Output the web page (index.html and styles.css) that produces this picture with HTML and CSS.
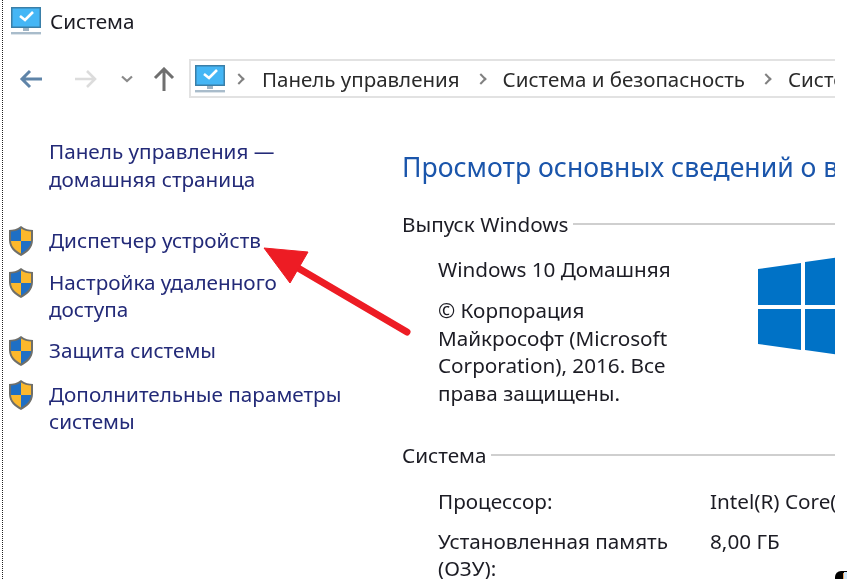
FILE: index.html
```html
<!DOCTYPE html>
<html lang="ru">
<head>
<meta charset="utf-8">
<title>Система</title>
<link rel="stylesheet" href="styles.css">
</head>
<body>
<svg width="0" height="0" class="defs">
  <defs>
    <g id="monitor">
      <rect x="0" y="0" width="30" height="21" fill="#3a7fa8"/>
      <rect x="1.5" y="1.5" width="27" height="18" fill="#45b6f5"/>
      <path d="M9 9l5 4 8-8" fill="none" stroke="#fff" stroke-width="2.6"/>
      <rect x="12" y="21" width="6" height="3" fill="#9fb4c4"/>
      <rect x="0" y="25" width="30" height="2.4" fill="#a9bccb"/>
    </g>
    <g id="shield">
      <path d="M13 0 C9 3 5 4 1 4 L1 14 C1 22 7 27 13 30 C19 27 25 22 25 14 L25 4 C21 4 17 3 13 0Z" fill="#6f6f6a"/>
      <path d="M13 2.5 V15 H3 V5.6 C6.5 5.5 10 4.5 13 2.5Z" fill="#1f6fc4"/>
      <path d="M13 2.5 V15 H23 V5.6 C19.5 5.5 16 4.5 13 2.5Z" fill="#fbb82c"/>
      <path d="M3 15 H13 V27.5 C8 25 3.4 21 3 15Z" fill="#fbb82c"/>
      <path d="M23 15 H13 V27.5 C18 25 22.6 21 23 15Z" fill="#1f6fc4"/>
    </g>
  </defs>
</svg>
<div class="window">
  <header class="titlebar">
    <svg class="icon-monitor" viewBox="0 0 30 28"><use href="#monitor"/></svg>
    <span class="title">Система</span>
  </header>
  <nav class="navbar">
    <div class="nav-buttons">
      <svg class="nav-back" viewBox="0 0 24 20"><path d="M23 10H3M11 2l-8 8 8 8" fill="none" stroke="#5f84a8" stroke-width="3"/></svg>
      <svg class="nav-forward" viewBox="0 0 24 20"><path d="M1 10h20M13 2l8 8-8 8" fill="none" stroke="#dcdcdc" stroke-width="2.6"/></svg>
      <svg class="nav-down" viewBox="0 0 12 8"><path d="M1 1.5l5 4.5 5-4.5" fill="none" stroke="#8a8a8a" stroke-width="2.2"/></svg>
      <svg class="nav-up" viewBox="0 0 22 24"><path d="M11 24V3M2 11l9-9 9 9" fill="none" stroke="#6f6f6f" stroke-width="3"/></svg>
    </div>
    <div class="address">
      <svg class="icon-monitor address-icon" viewBox="0 0 30 28"><use href="#monitor"/></svg>
      <span class="chevron first"></span>
      <span class="crumb">Панель управления</span>
      <span class="chevron"></span>
      <span class="crumb">Система и безопасность</span>
      <span class="chevron"></span>
      <span class="crumb">Система</span>
    </div>
  </nav>
  <div class="columns">
    <aside class="sidebar">
      <a class="home-link">Панель управления —<br>домашняя страница</a>
      <ul class="tasks">
        <li class="task task-device"><svg class="shield" viewBox="0 0 26 30"><use href="#shield"/></svg><a>Диспетчер устройств</a></li>
        <li class="task task-remote"><svg class="shield" viewBox="0 0 26 30"><use href="#shield"/></svg><a>Настройка удаленного<br>доступа</a></li>
        <li class="task task-protect"><svg class="shield" viewBox="0 0 26 30"><use href="#shield"/></svg><a>Защита системы</a></li>
        <li class="task task-advanced"><svg class="shield" viewBox="0 0 26 30"><use href="#shield"/></svg><a>Дополнительные параметры<br>системы</a></li>
      </ul>
    </aside>
    <main class="content">
      <h1 class="heading">Просмотр основных сведений о вашем компьютере</h1>
      <section class="edition">
        <h2 class="group-title"><span>Выпуск Windows</span></h2>
        <div class="edition-body">
          <div class="edition-text">
            <p class="edition-name">Windows 10 Домашняя</p>
            <p class="copyright">© Корпорация<br>Майкрософт (Microsoft<br>Corporation), 2016. Все<br>права защищены.</p>
          </div>
          <svg class="winlogo" viewBox="0 0 90 96"><path d="M0 11 L43 5 V47 H0Z M47 4 L90 -2 V47 H47Z M0 51 H43 V92 L0 86Z M47 51 H90 V98 L47 92Z" fill="#0072c6"/></svg>
        </div>
      </section>
      <section class="system">
        <h2 class="group-title"><span>Система</span></h2>
        <dl class="specs">
          <dt>Процессор:</dt><dd>Intel(R) Core(TM) i5</dd>
          <dt>Установленная память (ОЗУ):</dt><dd>8,00 ГБ</dd>
        </dl>
      </section>
    </main>
  </div>
  <svg class="arrow" viewBox="0 0 160 100"><path d="M145 88 L36 24" stroke="#ed1c24" stroke-width="7" stroke-linecap="round" fill="none"/><path d="M2 4 L46 8 L28 39Z" fill="#ed1c24" stroke="#ed1c24" stroke-linejoin="round"/></svg>
</div>
<div class="corner-mark"><span></span></div>
</body>
</html>
```
FILE: styles.css
```css
* { box-sizing: border-box; }
html, body { margin: 0; padding: 0; }
body {
  position: relative;
  width: 847px;
  height: 579px;
  overflow: hidden;
  background: #fff;
  font-family: "Noto Sans", "Open Sans", sans-serif;
  font-size: 20.7px;
  color: #1c1c24;
}
.defs { position: absolute; }
.window {
  position: relative;
  width: 833px;
  height: 579px;
  margin-left: 2px;
  border-left: 1px dotted #222;
  overflow: hidden;
  filter: blur(0.45px);
}
.titlebar {
  display: flex;
  align-items: center;
  height: 41px;
  padding: 1px 0 0 8px;
}
.icon-monitor { width: 30px; height: 28px; flex: none; }
.title { margin-left: 9px; line-height: 28px; }
.navbar {
  display: flex;
  align-items: center;
  height: 39px;
  margin-top: 18px;
}
.nav-buttons {
  display: flex;
  align-items: center;
  width: 186px;
  flex: none;
  padding-left: 16px;
}
.nav-back { width: 24px; height: 20px; }
.nav-forward { width: 24px; height: 20px; margin-left: 31px; }
.nav-down { width: 12px; height: 8px; margin-left: 23px; }
.nav-up { width: 22px; height: 24px; margin-left: 20px; }
.address {
  display: flex;
  align-items: center;
  flex: 1;
  min-width: 0;
  height: 39px;
  border: 2px solid #e2e2e2;
  border-right: 0;
  white-space: nowrap;
  overflow: hidden;
  padding-left: 4px;
  font-size: 20.5px;
  color: #2a2a2a;
}
.address-icon { margin-top: 1px; }
.chevron {
  width: 8px;
  height: 8px;
  margin: 0 18px 0 17px;
  flex: none;
  border-top: 2.5px solid #808080;
  border-right: 2.5px solid #808080;
  transform: rotate(45deg);
}
.chevron.first { margin: 0 19px 0 10px; }
.crumb { line-height: 28px; }
.columns { display: flex; }
.sidebar { width: 399px; flex: none; padding-top: 39px; }
.home-link {
  display: block;
  margin-left: 46px;
  line-height: 28px;
  color: #232a78;
}
.tasks { list-style: none; margin: 0; padding: 0 0 0 5px; }
.task {
  display: flex;
  align-items: flex-start;
  line-height: 27px;
  color: #232a78;
}
.task a { margin-left: 15px; }
.task-device { margin-top: 34px; }
.task-remote { margin-top: 13px; }
.task-protect { margin-top: 14px; }
.task-advanced { margin-top: 15px; }
.shield { width: 26px; height: 30px; flex: none; margin-top: -1px; }
.content { flex: 1; min-width: 0; padding-top: 51px; }
.heading {
  margin: 0;
  font-size: 26.6px;
  font-weight: 400;
  line-height: 36px;
  color: #1a55ab;
  white-space: nowrap;
}
.group-title {
  display: flex;
  align-items: center;
  margin: 0;
  font-size: 20.7px;
  font-weight: 400;
  line-height: 28px;
  white-space: nowrap;
}
.group-title::after {
  content: "";
  flex: 1;
  height: 1.5px;
  margin-left: 4px;
  background: #cfcfcf;
}
.edition { margin-top: 25px; }
.edition-body {
  display: flex;
  padding: 18px 0 0 36px;
}
.edition-text { width: 320px; flex: none; }
.edition-text p { margin: 0; line-height: 27.4px; }
.copyright { margin-top: 14px !important; }
.winlogo { width: 90px; height: 96px; flex: none; margin: 2px 0 0 0; overflow: visible; }
.system { margin-top: 34px; }
.specs {
  display: grid;
  grid-template-columns: 272px 1fr;
  row-gap: 13px;
  margin: 19px 0 0;
  padding-left: 36px;
  line-height: 27px;
}
.specs dt { width: 250px; }
.specs dd { margin: 0; white-space: nowrap; }
.arrow {
  position: absolute;
  left: 259px;
  top: 244px;
  width: 160px;
  height: 100px;
}
.corner-mark {
  position: absolute;
  right: 0;
  bottom: 0;
  width: 12px;
  height: 8px;
  background: #000;
  border-radius: 6px 0 0 0;
}
.corner-mark span {
  position: absolute;
  left: 8px;
  top: 2px;
  width: 1px;
  height: 6px;
  background: #e8a35c;
  box-shadow: 2px 0 0 1px #cfe6fa;
}
```
